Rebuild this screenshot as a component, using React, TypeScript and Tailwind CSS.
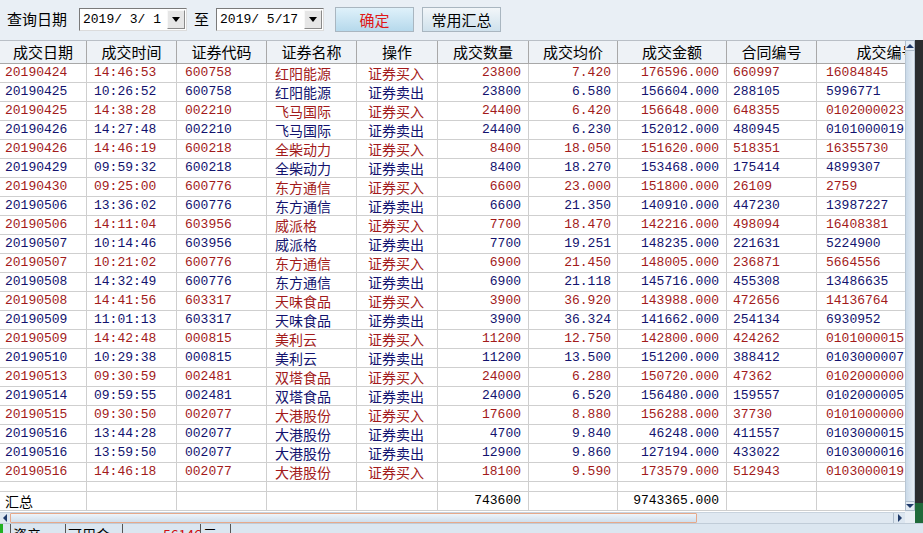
import React from "react";

type Trade = {
  date: string;
  time: string;
  code: string;
  name: string;
  buy: boolean;
  qty: string;
  price: string;
  amount: string;
  contract: string;
  dealNo: string;
};

const raw = `20190424 14:46:53 600758 红阳能源 B 23800 7.420 176596.000 660997 16084845
20190425 10:26:52 600758 红阳能源 S 23800 6.580 156604.000 288105 5996771
20190425 14:38:28 002210 飞马国际 B 24400 6.420 156648.000 648355 0102000023
20190426 14:27:48 002210 飞马国际 S 24400 6.230 152012.000 480945 0101000019
20190426 14:46:19 600218 全柴动力 B 8400 18.050 151620.000 518351 16355730
20190429 09:59:32 600218 全柴动力 S 8400 18.270 153468.000 175414 4899307
20190430 09:25:00 600776 东方通信 B 6600 23.000 151800.000 26109 2759
20190506 13:36:02 600776 东方通信 S 6600 21.350 140910.000 447230 13987227
20190506 14:11:04 603956 威派格 B 7700 18.470 142216.000 498094 16408381
20190507 10:14:46 603956 威派格 S 7700 19.251 148235.000 221631 5224900
20190507 10:21:02 600776 东方通信 B 6900 21.450 148005.000 236871 5664556
20190508 14:32:49 600776 东方通信 S 6900 21.118 145716.000 455308 13486635
20190508 14:41:56 603317 天味食品 B 3900 36.920 143988.000 472656 14136764
20190509 11:01:13 603317 天味食品 S 3900 36.324 141662.000 254134 6930952
20190509 14:42:48 000815 美利云 B 11200 12.750 142800.000 424262 0101000015
20190510 10:29:38 000815 美利云 S 11200 13.500 151200.000 388412 0103000007
20190513 09:30:59 002481 双塔食品 B 24000 6.280 150720.000 47362 0102000000
20190514 09:59:55 002481 双塔食品 S 24000 6.520 156480.000 159557 0102000005
20190515 09:30:50 002077 大港股份 B 17600 8.880 156288.000 37730 0101000000
20190516 13:44:28 002077 大港股份 S 4700 9.840 46248.000 411557 0103000015
20190516 13:59:50 002077 大港股份 S 12900 9.860 127194.000 433022 0103000016
20190516 14:46:18 002077 大港股份 B 18100 9.590 173579.000 512943 0103000019`;

const trades: Trade[] = raw.split("\n").map((line) => {
  const [date, time, code, name, side, qty, price, amount, contract, dealNo] = line.split(" ");
  return { date, time, code, name, buy: side === "B", qty, price, amount, contract, dealNo };
});

const mono = "font-['Liberation_Mono','Noto_Sans_CJK_SC',monospace] text-[13px]";
const cjk = "font-['Noto_Sans_CJK_SC',sans-serif] text-[14px]";
const cell = "shrink-0 border-r border-[#cfcfcf] overflow-hidden whitespace-nowrap flex items-center";

const headers = [
  { label: "成交日期", w: "w-[87px]" },
  { label: "成交时间", w: "w-[90px]" },
  { label: "证券代码", w: "w-[90px]" },
  { label: "证券名称", w: "w-[90px]" },
  { label: "操作", w: "w-[81px]" },
  { label: "成交数量", w: "w-[91px]" },
  { label: "成交均价", w: "w-[89px]" },
  { label: "成交金额", w: "w-[109px]" },
  { label: "合同编号", w: "w-[90px]" },
  { label: "成交编号", w: "w-[140px]" },
];

function DateBox({ value, w }: { value: string; w: string }) {
  return (
    <div className={`${w} h-[23px] flex items-stretch bg-white border border-[#7a7a7a] border-r-[#dcdcdc] border-b-[#dcdcdc]`}>
      <span className={`${mono} flex-1 pl-[3px] leading-[21px] text-black`}>{value}</span>
      <span className="w-[18px] my-[1px] mr-[1px] bg-[#e6e6e6] border border-[#f8f8f8] border-r-[#8a8a8a] border-b-[#8a8a8a] flex items-center justify-center">
        <span className="w-0 h-0 border-l-[4px] border-r-[4px] border-t-[5px] border-l-transparent border-r-transparent border-t-black" />
      </span>
    </div>
  );
}

function Row({ t }: { t: Trade }) {
  const color = t.buy ? "text-[#a21a1a]" : "text-[#12126e]";
  return (
    <div className={`flex h-[19px] border-b border-[#cfcfcf] bg-white ${color}`}>
      <div className={`${cell} w-[87px] pl-[5px] ${mono}`}>{t.date}</div>
      <div className={`${cell} w-[90px] pl-[7px] ${mono}`}>{t.time}</div>
      <div className={`${cell} w-[90px] pl-[8px] ${mono}`}>{t.code}</div>
      <div className={`${cell} w-[90px] pl-[8px] ${cjk}`}>{t.name}</div>
      <div className={`${cell} w-[81px] pl-[11px] ${cjk}`}>{t.buy ? "证券买入" : "证券卖出"}</div>
      <div className={`${cell} w-[91px] justify-end pr-[7px] ${mono}`}>{t.qty}</div>
      <div className={`${cell} w-[89px] justify-end pr-[6px] ${mono}`}>{t.price}</div>
      <div className={`${cell} w-[109px] justify-end pr-[7px] ${mono}`}>{t.amount}</div>
      <div className={`${cell} w-[90px] pl-[6px] ${mono}`}>{t.contract}</div>
      <div className={`${cell} w-[140px] pl-[9px] ${mono}`}>{t.dealNo}</div>
    </div>
  );
}

function Arrow({ dir }: { dir: "up" | "down" | "left" | "right" }) {
  const tri = {
    up: "border-l-[4px] border-r-[4px] border-b-[4px] border-l-transparent border-r-transparent border-b-[#1f3a6a]",
    down: "border-l-[4px] border-r-[4px] border-t-[4px] border-l-transparent border-r-transparent border-t-[#1f3a6a]",
    left: "border-t-[4px] border-b-[4px] border-r-[4px] border-t-transparent border-b-transparent border-r-[#1f3a6a]",
    right: "border-t-[4px] border-b-[4px] border-l-[4px] border-t-transparent border-b-transparent border-l-[#1f3a6a]",
  };
  return <span className={`w-0 h-0 ${tri[dir]}`} />;
}

export default function App() {
  return (
    <div className="w-[923px] h-[533px] overflow-hidden bg-[#e9eff5] flex flex-col">
      {/* toolbar */}
      <div className="h-[40px] shrink-0 flex items-center pl-[7px] pb-[2px]">
        <span className={`${cjk} text-[15px] text-black mr-[12px]`}>查询日期</span>
        <DateBox value="2019/ 3/ 1" w="w-[108px]" />
        <span className={`${cjk} text-[15px] text-black mx-[7px]`}>至</span>
        <DateBox value="2019/ 5/17" w="w-[108px]" />
        <button className="ml-[11px] w-[79px] h-[25px] border border-[#a9b6c0] bg-gradient-to-b from-[#dff1fa] to-[#b6d9ec] text-[#e01818] font-['Noto_Sans_CJK_SC',sans-serif] text-[15px] leading-none">
          确定
        </button>
        <button className="ml-[8px] w-[79px] h-[25px] border border-[#a9b6c0] bg-gradient-to-b from-[#f2f6f9] to-[#cfe1ec] text-black font-['Noto_Sans_CJK_SC',sans-serif] text-[15px] leading-none">
          常用汇总
        </button>
      </div>

      <div className="flex flex-1 min-h-0">
        <div className="flex flex-col w-[905px] shrink-0">
          <div className="h-[472px] overflow-hidden bg-white flex flex-col">
            {/* header */}
            <div className="flex h-[24px] shrink-0 bg-[#eef2f6] border-t border-[#b9bfc6] border-b border-b-[#a8a8a8]">
              {headers.map((h) => (
                <div
                  key={h.label}
                  className={`${h.w} shrink-0 border-r border-[#a8a8a8] flex items-center justify-center ${cjk} text-[15px] text-black whitespace-nowrap`}
                >
                  {h.label}
                </div>
              ))}
            </div>
            {trades.map((t, i) => (
              <Row key={i} t={t} />
            ))}
            <div className="flex h-[10px] border-b border-[#cfcfcf]">
              {headers.map((h) => (
                <div key={h.label} className={`${h.w} shrink-0 border-r border-[#cfcfcf]`} />
              ))}
            </div>
            <div className="flex h-[19px] border-b border-[#cfcfcf] text-black">
              <div className={`${cell} w-[87px] pl-[5px] ${cjk}`}>汇总</div>
              <div className={`${cell} w-[90px]`} />
              <div className={`${cell} w-[90px]`} />
              <div className={`${cell} w-[90px]`} />
              <div className={`${cell} w-[81px]`} />
              <div className={`${cell} w-[91px] justify-end pr-[7px] ${mono}`}>743600</div>
              <div className={`${cell} w-[89px]`} />
              <div className={`${cell} w-[109px] justify-end pr-[7px] ${mono}`}>9743365.000</div>
              <div className={`${cell} w-[90px]`} />
              <div className={`${cell} w-[140px]`} />
            </div>
          </div>
          {/* horizontal scrollbar */}
          <div className="h-[11px] flex bg-[#dfe8f1] border-t border-[#c8d3de]">
            <div className="w-[10px] flex items-center justify-center">
              <Arrow dir="left" />
            </div>
            <div className="w-[687px] bg-gradient-to-b from-[#eef4fa] to-[#cfdeec] border border-[#e7a98a] rounded-[1px]" />
            <div className="flex-1" />
            <div className="w-[12px] bg-[#dce6f0] border-l border-[#aebccb] flex items-center justify-center">
              <Arrow dir="right" />
            </div>
          </div>
        </div>

        {/* vertical scrollbar */}
        <div className="w-[10px] shrink-0 flex flex-col bg-[#dfe8f1] h-[483px]">
          <div className="h-[11px] bg-[#e4ecf4] border border-[#aebccb] flex items-center justify-center">
            <Arrow dir="up" />
          </div>
          <div className="flex-1 bg-gradient-to-r from-[#c9d9e8] to-[#e8eff6] border-x border-[#b8c6d4]" />
          <div className="h-[10px] bg-[#e4ecf4] border border-[#aebccb] flex items-center justify-center">
            <Arrow dir="down" />
          </div>
          <div className="h-[12px] bg-[#e9eff5]" />
        </div>
        <div className="w-[8px] shrink-0 flex flex-col">
          <div className="flex-1 bg-[#2b2d2f]" />
          <div className="h-[20px] bg-[#1f6a3a]" />
        </div>
      </div>

      {/* status strip (mostly clipped) */}
      <div className="h-[10px] shrink-0 overflow-hidden bg-[#dbe6f0] flex items-start border-t border-[#c0ccd8]">
        <div className="w-[3px] h-[10px] bg-[#22b022]" />
        <div className={`h-[20px] flex items-start ${cjk} text-[14px] leading-[20px]`}>
          <span className="ml-[7px] w-[55px] border-l border-[#555] pl-[2px] text-black">资产</span>
          <span className="w-[57px] border-l border-[#555] pl-[2px] text-black">可用金额</span>
          <span className="w-[78px] border-l border-[#555] pl-[40px] text-[#d01010]">56146</span>
          <span className="w-[30px] border-l border-[#555] pl-[2px] text-black">元</span>
          <span className="w-[1px] border-l border-[#555]">&nbsp;</span>
        </div>
      </div>
    </div>
  );
}
